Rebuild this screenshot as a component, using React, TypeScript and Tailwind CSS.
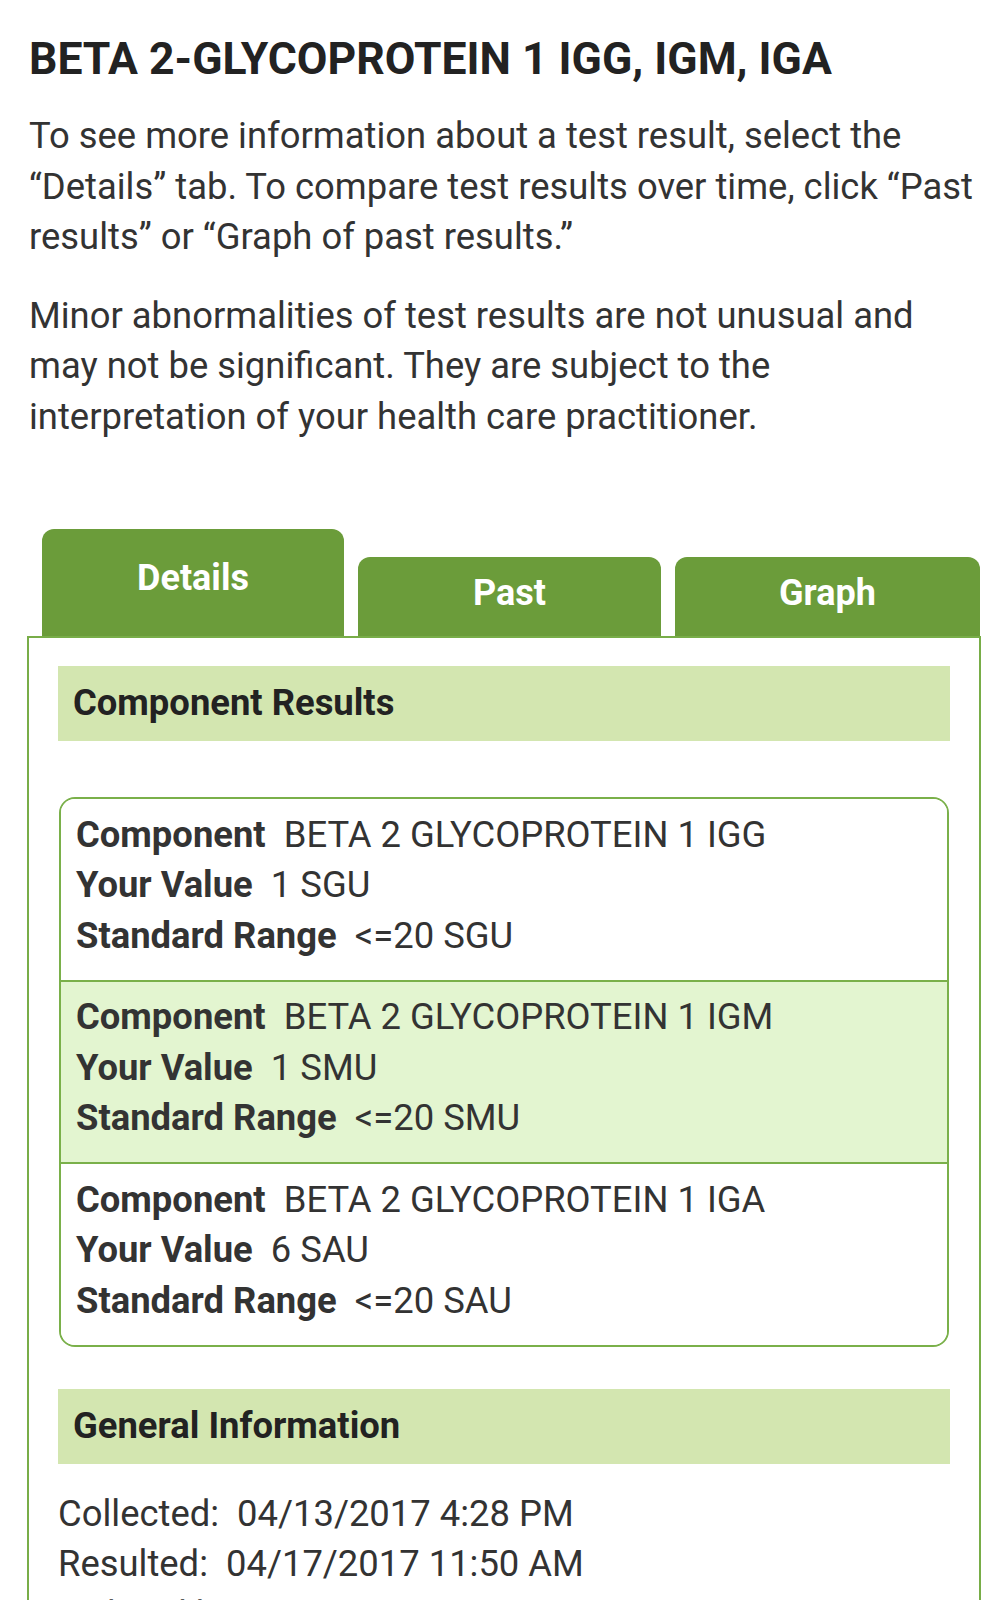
import React from "react";

const rows = [
  { component: "BETA 2 GLYCOPROTEIN 1 IGG", value: "1 SGU", range: "<=20 SGU", shaded: false },
  { component: "BETA 2 GLYCOPROTEIN 1 IGM", value: "1 SMU", range: "<=20 SMU", shaded: true },
  { component: "BETA 2 GLYCOPROTEIN 1 IGA", value: "6 SAU", range: "<=20 SAU", shaded: false },
];

function ResultRow({ component, value, range, shaded }: (typeof rows)[number]) {
  return (
    <div className={`px-[15px] pt-[10.5px] pb-[18.5px] ${shaded ? "bg-[#e3f5d0]" : "bg-white"}`}>
      <div>
        <span className="font-bold">Component</span>&nbsp;&nbsp;{component}
      </div>
      <div>
        <span className="font-bold">Your Value</span>&nbsp;&nbsp;{value}
      </div>
      <div>
        <span className="font-bold">Standard Range</span>&nbsp;&nbsp;{range}
      </div>
    </div>
  );
}

export default function App() {
  return (
    <div className="h-[1600px] overflow-hidden bg-white text-[#333] font-['Roboto',sans-serif]">
      <div className="px-[29px] pt-[33px]">
        <h1 className="text-[44.5px] leading-[52px] font-bold text-[#222]">
          BETA 2-GLYCOPROTEIN 1 IGG, IGM, IGA
        </h1>
        <p className="mt-[26px] text-[36.4px] leading-[50.5px]">
          To see more information about a test result, select the “Details” tab. To compare test
          results over time, click “Past results” or “Graph of past results.”
        </p>
        <p className="mt-[28px] text-[36.4px] leading-[50.5px]">
          Minor abnormalities of test results are not unusual and may not be significant. They are
          subject to the interpretation of your health care practitioner.
        </p>
      </div>

      <div className="mt-[87px] ml-[27px] w-[954px]">
        <div className="flex items-end gap-[14px] pl-[15px]">
          <div className="w-[302px] h-[107px] rounded-t-[12px] bg-[#6b9c3a] pt-[28px] text-center text-[36px] leading-[42px] font-bold text-white">
            Details
          </div>
          <div className="w-[303px] h-[79px] rounded-t-[12px] bg-[#6b9c3a] pt-[15px] text-center text-[36px] leading-[42px] font-bold text-white">
            Past
          </div>
          <div className="w-[305px] h-[79px] rounded-t-[12px] bg-[#6b9c3a] pt-[15px] text-center text-[36px] leading-[42px] font-bold text-white">
            Graph
          </div>
        </div>

        <div className="border-2 border-[#78ad48] px-[29px] pt-[28px] pb-[40px] text-[36.4px] leading-[50.5px]">
          <div className="h-[75px] bg-[#d3e6b0] px-[15px] flex items-center font-bold text-[#222]">
            Component Results
          </div>

          <div className="mt-[56px] mx-px rounded-[16px] border-2 border-[#7ab04a] overflow-hidden divide-y-2 divide-[#7ab04a]">
            {rows.map((r) => (
              <ResultRow key={r.component} {...r} />
            ))}
          </div>

          <div className="mt-[42px] h-[75px] bg-[#d3e6b0] px-[15px] flex items-center font-bold text-[#222]">
            General Information
          </div>

          <div className="mt-[25px]">
            <div>Collected:&nbsp;&nbsp;04/13/2017 4:28 PM</div>
            <div>Resulted:&nbsp;&nbsp;04/17/2017 11:50 AM</div>
            <div>Ordered by:&nbsp;&nbsp;</div>
          </div>
        </div>
      </div>
    </div>
  );
}
